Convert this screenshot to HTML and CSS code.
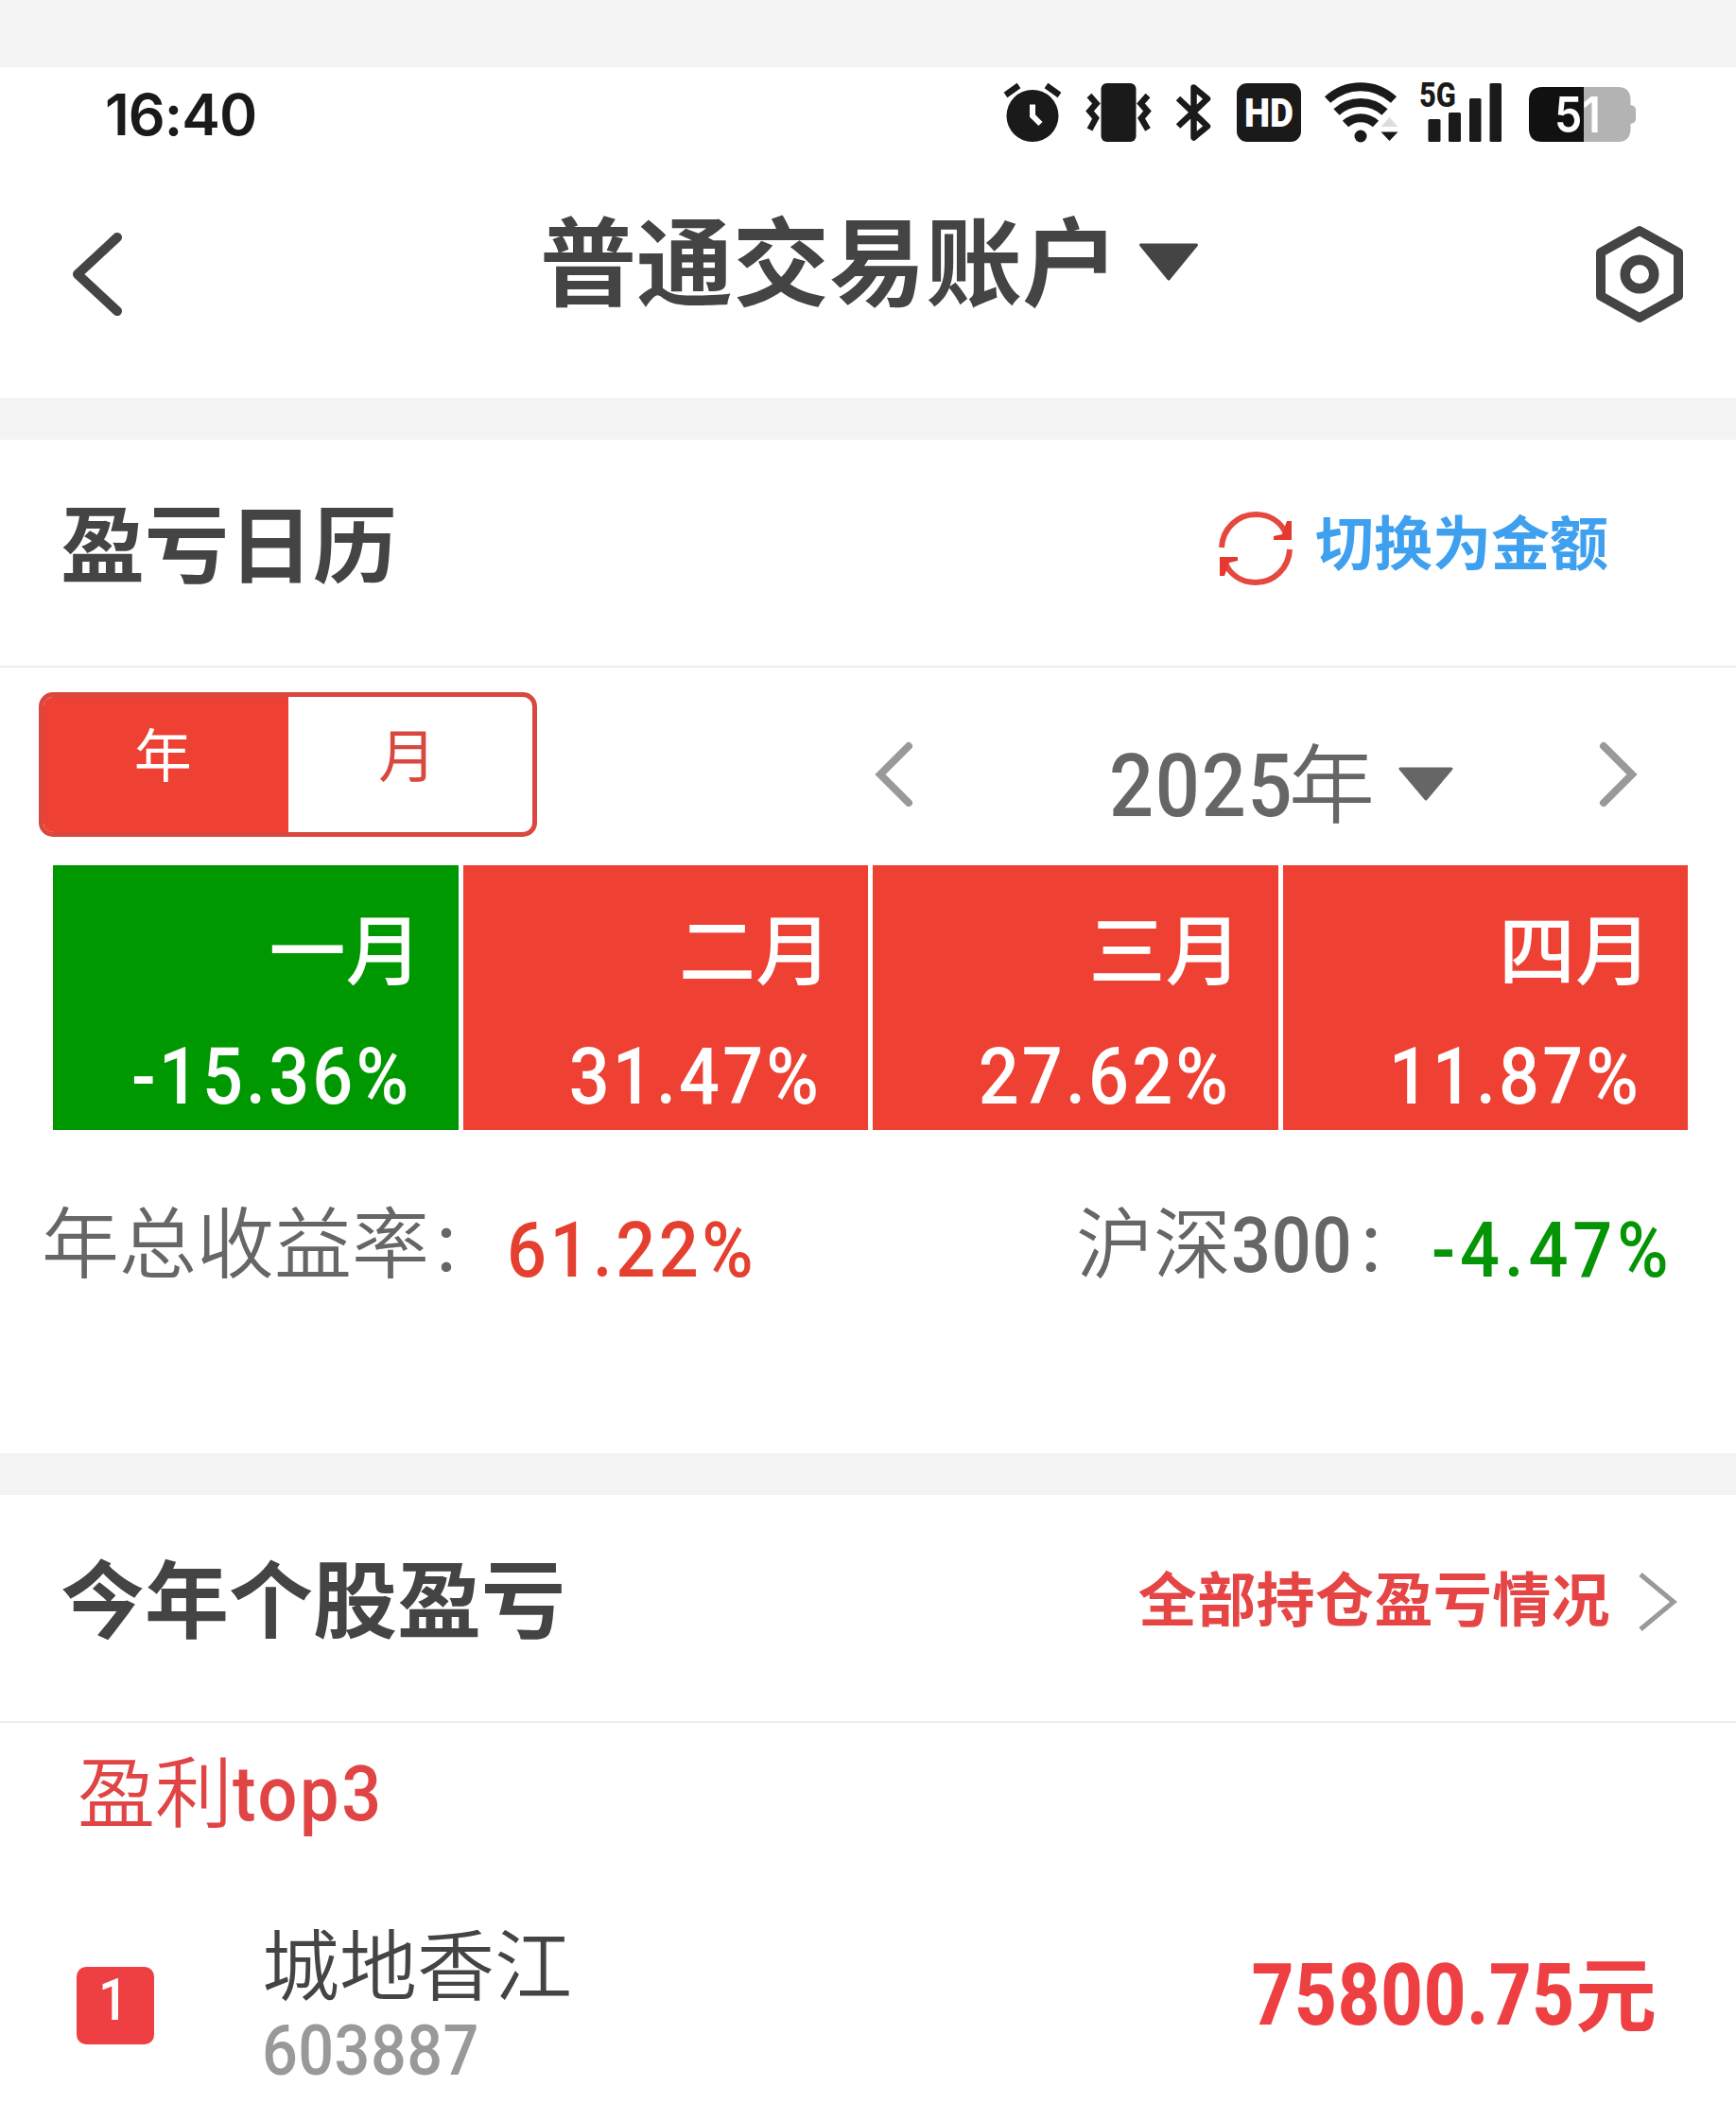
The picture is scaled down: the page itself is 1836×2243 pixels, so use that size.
FILE: index.html
```
<!DOCTYPE html>
<html lang="zh-CN">
  <head>
    <title>盈亏日历</title>
    <meta charset="UTF-8" />
    <meta name="viewport" content="width=device-width, initial-scale=1" />
    <link rel="stylesheet" href="styles.css">
  </head>
  <body>
    <!-- 状态栏 -->
    <div class="status-bar">
      <span class="time">16:40</span>
      <div class="status-icons">
        <svg width="62" height="64" viewBox="0 0 62 64">
          <circle cx="31" cy="35.500" r="27.500" fill="#1a1a1a" />
          <path d="M2.500 13.500L16.500 3.500M59.500 13.500L45.500 3.500" stroke="#1a1a1a" stroke-width="6.500" />
          <path d="M31 23.500V35.500L39.500 44" fill="none" stroke="#fff" stroke-width="6" />
        </svg>
        <svg class="vibrate" width="68" height="64" viewBox="0 0 68 64">
          <rect x="15.500" y="1" width="37" height="62" rx="6" fill="#1a1a1a" />
          <path d="M3 14L10.500 22.500L3.500 30.500L10 38L3.500 50M65 14L57.500 22.500L64.500 30.500L58 38L65 50" fill="none" stroke="#1a1a1a" stroke-width="6.500" />
        </svg>
        <svg class="bluetooth" width="38" height="64" viewBox="0 0 38 64">
          <path d="M2 17L33 46.500L18.500 58.500V5.500L33 17.500L2 46.500" fill="none" stroke="#1a1a1a" stroke-width="6.500" stroke-linejoin="round" />
        </svg>
        <svg class="hd" width="68" height="64" viewBox="0 0 68 64">
          <rect x="0" y="1" width="68" height="62" rx="11" fill="#1a1a1a" />
          <text class="hd-text" x="34" y="47" text-anchor="middle" textLength="52" lengthAdjust="spacingAndGlyphs">HD</text>
        </svg>
        <svg class="wifi" width="80" height="64" viewBox="0 0 80 64">
          <path d="M3 18.500C23 0 53 0 73 18.500" fill="none" stroke="#1a1a1a" stroke-width="9" />
          <path d="M12.500 31.500C26.500 18 49.500 18 63.500 31.500" fill="none" stroke="#1a1a1a" stroke-width="9" />
          <path d="M22 44C31 35.500 45 35.500 54 44" fill="none" stroke="#1a1a1a" stroke-width="9" />
          <circle cx="38" cy="57" r="6.500" fill="#1a1a1a" />
          <path d="M59.500 47L68.500 37L77.500 47Z" fill="#ddd" />
          <path d="M59.500 52.500H77.500L68.500 62Z" fill="#1a1a1a" />
        </svg>
        <svg class="signal" width="88" height="64" viewBox="0 0 88 64">
          <text class="net-text" x="0" y="26" textLength="39" lengthAdjust="spacingAndGlyphs">5G</text>
          <rect x="9.500" y="39" width="13" height="24" rx="1.500" fill="#1a1a1a" />
          <rect x="31" y="32" width="13" height="31" rx="1.500" fill="#1a1a1a" />
          <rect x="53" y="17" width="12.500" height="46" rx="1.500" fill="#1a1a1a" />
          <rect x="74.500" y="1" width="12.500" height="62" rx="1.500" fill="#1a1a1a" />
        </svg>
        <svg class="battery" width="113" height="64" viewBox="0 0 113 64">
          <path d="M58 5H94Q107 5 107.500 18V24Q113 25 113 29V39Q113 43 107.500 44V50Q107 63 94 63H58Z" fill="#b3b3b3" />
          <path d="M58 5H14Q0 5 0 19V49Q0 63 14 63H58Z" fill="#111" />
          <text class="battery-text" x="27" y="53" textLength="49" lengthAdjust="spacingAndGlyphs">51</text>
        </svg>
      </div>
    </div>

    <!-- 导航 -->
    <div class="nav">
      <svg class="back" width="54" height="90" viewBox="0 0 54 90">
        <path d="M48 6L6 45L48 84" fill="none" stroke="#444" stroke-width="10" stroke-linecap="round" stroke-linejoin="round" />
      </svg>
      <h1 class="nav-title">普通交易账户</h1>
      <svg class="nav-arrow" width="64" height="40" viewBox="0 0 64 40">
        <path d="M2.500 2H61.500L32 38Z" fill="#444" stroke="#444" stroke-width="3" stroke-linejoin="round" />
      </svg>
      <svg class="setting" width="92" height="104" viewBox="0 0 92 104">
        <path d="M46 6L87 29V75L46 98L5 75V29Z" fill="none" stroke="#444" stroke-width="10" stroke-linejoin="round" />
        <circle cx="46" cy="52" r="15.300" fill="none" stroke="#444" stroke-width="10.500" />
      </svg>
    </div>

    <!-- 盈亏日历 -->
    <div class="section calendar">
      <div class="section-head">
        <h2>盈亏日历</h2>
        <div class="switch">
          <svg class="refresh" width="78" height="78" viewBox="0 0 78 78">
            <path d="M3 38C4 18 20 3 39 3C54 3 66 11 72 25M75 40C74 60 58 75 39 75C24 75 12 67 6 53" fill="none" stroke="#e5483f" stroke-width="6" />
            <path d="M77 10V30H58V26L67 24L72 10Z" fill="#e5382f" />
            <path d="M1 68V48H20V52L11 54L6 68Z" fill="#e5382f" />
          </svg>
          <span>切换为金额</span>
        </div>
      </div>

      <div class="toolbar">
        <div class="tabs">
          <div class="tab active">年</div>
          <div class="tab">月</div>
        </div>
        <svg class="prev" width="40" height="68" viewBox="0 0 40 68">
          <path d="M35 4L5 34L35 64" fill="none" stroke="#999" stroke-width="8" stroke-linecap="round" />
        </svg>
        <div class="year"><span class="num">2025</span><span class="year-unit">年</span></div>
        <svg class="year-arrow" width="58" height="36" viewBox="0 0 58 36">
          <path d="M2 2H56L29 34Z" fill="#666" stroke="#666" stroke-width="3" stroke-linejoin="round" />
        </svg>
        <svg class="next" width="40" height="68" viewBox="0 0 40 68">
          <path d="M5 4L35 34L5 64" fill="none" stroke="#999" stroke-width="8" stroke-linecap="round" />
        </svg>
      </div>

      <div class="months">
        <div class="month down">
          <div class="month-name">一月</div>
          <div class="month-rate"><span class="num">-15.36%</span></div>
        </div>
        <div class="month">
          <div class="month-name">二月</div>
          <div class="month-rate"><span class="num">31.47%</span></div>
        </div>
        <div class="month">
          <div class="month-name">三月</div>
          <div class="month-rate"><span class="num">27.62%</span></div>
        </div>
        <div class="month">
          <div class="month-name">四月</div>
          <div class="month-rate"><span class="num">11.87%</span></div>
        </div>
      </div>

      <div class="summary">
        <span class="label">年总收益率</span>
        <span class="label colon">：</span>
        <span class="num total">61.22%</span>
        <span class="label index">沪深</span>
        <span class="num index-num">300</span>
        <span class="label colon">：</span>
        <span class="num index-rate">-4.47%</span>
      </div>
    </div>

    <!-- 个股盈亏 -->
    <div class="section stocks">
      <div class="section-head">
        <h2>今年个股盈亏</h2>
        <div class="more">
          <span>全部持仓盈亏情况</span>
          <svg width="42" height="64" viewBox="0 0 42 64">
            <path d="M3 3L38 32L3 61" fill="none" stroke="#999" stroke-width="5" />
          </svg>
        </div>
      </div>
      <div class="top-title">盈利<span class="num">top3</span></div>
      <div class="stock">
        <div class="rank"><span class="num">1</span></div>
        <div class="stock-info">
          <div class="stock-name">城地香江</div>
          <div class="stock-code"><span class="num">603887</span></div>
        </div>
        <div class="profit"><span class="num">75800.75</span><span class="unit">元</span></div>
      </div>
    </div>
  </body>
</html>
```
FILE: styles.css
```
* {
  box-sizing: border-box;
}

body {
  margin: 0;
  padding-top: 71px;
  width: 1836px;
  height: 2243px;
  overflow: hidden;
  background: #f3f3f3;
  color: #444;
  font-family: "Noto Sans CJK SC", sans-serif;
  line-height: 1;
}

h1,
h2 {
  margin: 0;
  font-weight: 700;
}

svg {
  display: block;
  flex: none;
  overflow: visible;
}

/* 数字统一用窄一点的字形 */
.num {
  display: inline-block;
  font-family: Roboto, sans-serif;
  font-weight: 500;
  letter-spacing: 4px;
  transform: scaleX(0.9);
  transform-origin: left center;
  white-space: nowrap;
}

/* 状态栏 */
.status-bar {
  display: flex;
  justify-content: space-between;
  height: 100px;
  padding: 16px 106px 0 111px;
  background: #fff;
}

.time {
  margin-top: 4px;
  font-family: Inter, sans-serif;
  font-size: 61px;
  font-weight: 600;
  letter-spacing: -1px;
  color: #1a1a1a;
}

.status-icons {
  display: flex;
}

.vibrate {
  margin-left: 26px;
}

.bluetooth {
  margin-left: 27px;
}

.hd {
  margin-left: 26px;
}

.wifi {
  margin-left: 25px;
}

.signal {
  margin-left: 20px;
}

.battery {
  margin-left: 28px;
}

.hd-text {
  font-family: Roboto, sans-serif;
  font-size: 43px;
  font-weight: 900;
  fill: #fff;
}

.net-text {
  font-family: Roboto, sans-serif;
  font-size: 36px;
  font-weight: 800;
  fill: #1a1a1a;
}

.battery-text {
  font-family: Inter, sans-serif;
  font-size: 52px;
  font-weight: 600;
  fill: #fff;
}

/* 导航 */
.nav {
  display: flex;
  align-items: flex-start;
  height: 250px;
  padding: 0 56px 0 76px;
  background: #fff;
}

.back {
  margin-top: 74px;
}

.nav-title {
  margin: 50px 0 0 441px;
  font-size: 102px;
}

.nav-arrow {
  margin: 86px 0 0 21px;
}

.setting {
  margin: 67px 0 0 auto;
}

/* 区块 */
.section {
  margin-top: 44px;
  background: #fff;
}

.section-head {
  display: flex;
  align-items: flex-start;
  justify-content: space-between;
  height: 241px;
  padding: 61px 62px 0 64px;
  border-bottom: 2px solid #eee;
}

.section-head h2 {
  font-size: 89px;
}

.calendar {
  height: 1072px;
}

.stocks {
  height: 662px;
}

.switch {
  display: flex;
  margin: 14px 73px 0 0;
  font-size: 62px;
  font-weight: 700;
  color: #3ea0ee;
}

.refresh {
  margin: 1px 24px 0 0;
}

/* 年月切换 */
.toolbar {
  display: flex;
  align-items: flex-start;
  padding: 26px 0 0 41px;
}

.tabs {
  display: flex;
  width: 527px;
  height: 153px;
  border: 5px solid #d9483f;
  border-radius: 15px;
  overflow: hidden;
}

.tab {
  width: 50%;
  padding: 28px 6px 0 0;
  font-size: 61px;
  text-align: center;
  color: #d9483f;
}

.tab.active {
  background: #ee4033;
  color: #fff;
}

.prev {
  margin: 53px 0 0 358px;
}

.year {
  display: flex;
  margin: 46px 0 0 207px;
  width: 281px;
  font-size: 91px;
  font-weight: 350;
  color: #666;
}

.year .num {
  width: 190px;
  margin-top: 8px;
  font-size: 92px;
  letter-spacing: 2px;
}

.year-arrow {
  margin: 79px 0 0 25px;
}

.next {
  margin: 53px 0 0 154px;
}

/* 月份 */
.months {
  display: grid;
  grid-template-columns: repeat(4, 1fr);
  column-gap: 5px;
  margin: 30px 51px 0 56px;
}

.month {
  height: 280px;
  padding-top: 44px;
  background: #ee4033;
  color: #fff;
  text-align: right;
}

.month.down {
  background: #009800;
}

.month-name {
  padding-right: 38px;
  font-size: 81px;
  font-weight: 500;
}

.month-rate {
  display: flex;
  justify-content: flex-end;
  margin-top: 57px;
  padding-right: 49px;
  font-size: 84px;
}

.month-rate .num {
  letter-spacing: 3.5px;
  transform-origin: right center;
}

/* 收益率 */
.summary {
  display: flex;
  align-items: flex-start;
  padding: 74px 0 0 44px;
  font-size: 82px;
}

.label {
  font-weight: 350;
  color: #666;
}

.colon {
  width: 82px;
  margin-top: 8px;
  font-size: 72px;
}

.total {
  width: 260px;
  margin-top: 12px;
  color: #e5402f;
}

.index {
  margin-left: 342px;
}

.index-num {
  width: 130px;
  margin-top: 7px;
  letter-spacing: 1px;
  color: #666;
}

.index-rate {
  margin-top: 12px;
  letter-spacing: 5.5px;
  color: #059405;
}

/* 个股 */
.more {
  display: flex;
  margin-top: 15px;
  font-size: 62px;
  font-weight: 700;
  letter-spacing: 0.4px;
  color: #e64545;
}

.more svg {
  margin: 5px 0 0 29px;
}

.top-title {
  display: flex;
  padding: 28px 0 0 82px;
  font-size: 82px;
  font-weight: 350;
  color: #e04444;
}

.top-title .num {
  margin-top: 6px;
  letter-spacing: 3px;
}

.stock {
  display: flex;
  align-items: flex-start;
  padding: 95px 84px 0 81px;
}

.rank {
  display: flex;
  justify-content: center;
  width: 82px;
  height: 82px;
  margin-top: 47px;
  padding-top: 4px;
  border-radius: 10px;
  background: #ee4043;
  color: #fff;
  font-size: 62px;
}

.rank .num {
  transform-origin: center;
}

.stock-info {
  margin-left: 114px;
}

.stock-name {
  font-size: 82px;
  font-weight: 350;
}

.stock-code {
  display: flex;
  margin-top: 17px;
  font-size: 74px;
  color: #999;
}

.stock-code .num {
  letter-spacing: 0.5px;
}

.profit {
  display: flex;
  margin: 29px 0 0 auto;
  font-size: 86px;
  font-weight: 700;
  color: #ee4043;
}

.profit .num {
  margin-top: 4px;
  font-size: 90px;
  font-weight: 800;
  letter-spacing: 1px;
  transform: scaleX(0.86);
  transform-origin: right center;
}
```
